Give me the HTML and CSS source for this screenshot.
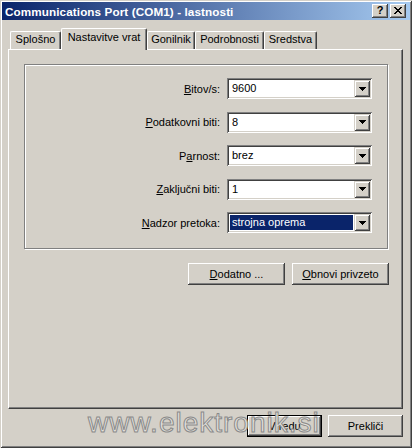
FILE: index.html
```html
<!DOCTYPE html>
<html lang="sl">
<head>
<meta charset="utf-8">
<title>Communications Port (COM1) - lastnosti</title>
<link rel="stylesheet" href="styles.css">
</head>
<body>
<div class="window">
  <div class="titlebar">
    <span class="title">Communications Port (COM1) - lastnosti</span>
    <div class="tbtns">
      <span class="tbtn help">?</span>
      <span class="tbtn close"><svg width="8" height="7" viewBox="0 0 8 7"><path d="M0 0h2v1h1v1h2v-1h1v-1h2v1h-1v1h-1v1h-1v1h1v1h1v1h1v1h-2v-1h-1v-1h-2v1h-1v1h-2v-1h1v-1h1v-1h1v-1h-1v-1h-1v-1h-1z" fill="#000"/></svg></span>
    </div>
  </div>
  <div class="content">
    <div class="tabs">
      <div class="tab w-splosno">Splošno</div>
      <div class="tab active w-nastavitve">Nastavitve vrat</div>
      <div class="tab w-gonilnik">Gonilnik</div>
      <div class="tab w-podrobnosti">Podrobnosti</div>
      <div class="tab w-sredstva">Sredstva</div>
    </div>
    <div class="panel">
      <div class="group">
        <span class="label"><u>B</u>itov/s:</span>
        <div class="combo"><span class="val">9600</span><span class="drop"><svg width="7" height="4" viewBox="0 0 7 4"><path d="M0 0h7v1h-1v1h-1v1h-1v1h-1v-1h-1v-1h-1v-1h-1z" fill="#000"/></svg></span></div>
        <span class="label"><u>P</u>odatkovni biti:</span>
        <div class="combo"><span class="val">8</span><span class="drop"><svg width="7" height="4" viewBox="0 0 7 4"><path d="M0 0h7v1h-1v1h-1v1h-1v1h-1v-1h-1v-1h-1v-1h-1z" fill="#000"/></svg></span></div>
        <span class="label">P<u>a</u>rnost:</span>
        <div class="combo"><span class="val">brez</span><span class="drop"><svg width="7" height="4" viewBox="0 0 7 4"><path d="M0 0h7v1h-1v1h-1v1h-1v1h-1v-1h-1v-1h-1v-1h-1z" fill="#000"/></svg></span></div>
        <span class="label"><u>Z</u>aključni biti:</span>
        <div class="combo"><span class="val">1</span><span class="drop"><svg width="7" height="4" viewBox="0 0 7 4"><path d="M0 0h7v1h-1v1h-1v1h-1v1h-1v-1h-1v-1h-1v-1h-1z" fill="#000"/></svg></span></div>
        <span class="label"><u>N</u>adzor pretoka:</span>
        <div class="combo"><span class="val sel">strojna oprema</span><span class="drop"><svg width="7" height="4" viewBox="0 0 7 4"><path d="M0 0h7v1h-1v1h-1v1h-1v1h-1v-1h-1v-1h-1v-1h-1z" fill="#000"/></svg></span></div>
      </div>
      <div class="actions">
        <button class="btn wide"><u>D</u>odatno ...</button>
        <button class="btn wide"><u>O</u>bnovi privzeto</button>
      </div>
    </div>
    <div class="footer">
      <button class="btn small default">V redu</button>
      <button class="btn small">Prekliči</button>
    </div>
  </div>
  <div class="watermark">www.elektronik.si</div>
</div>
</body>
</html>
```
FILE: styles.css
```css
* { box-sizing: border-box; }
body {
  margin: 0;
  font-family: "Liberation Sans", Arial, sans-serif;
  font-size: 11px;
  color: #000;
  background: #d4d0c8;
}
.window {
  position: relative;
  width: 412px;
  height: 448px;
  background: #d4d0c8;
  padding: 2px;
  box-shadow: inset 1px 1px #d4d0c8, inset -1px -1px #404040, inset 2px 2px #fff, inset -2px -2px #808080;
  overflow: hidden;
}
.titlebar {
  height: 18px;
  background: linear-gradient(to right, #0a246a, #a6caf0);
  display: flex;
  align-items: center;
  padding: 0 4px 0 3px;
}
.title {
  flex: 1;
  color: #fff;
  font-weight: bold;
  font-size: 11.7px;
  letter-spacing: 0.1px;
  white-space: nowrap;
}
.tbtns { display: flex; gap: 2px; }
.tbtn {
  width: 16px;
  height: 14px;
  background: #d4d0c8;
  box-shadow: inset -1px -1px #404040, inset 1px 1px #fff, inset -2px -2px #808080;
  display: flex;
  align-items: center;
  justify-content: center;
}
.help {
  font-weight: bold;
  font-size: 11px;
  line-height: 1;
  padding-bottom: 1px;
}
.close svg { display: block; margin-top: -1px; }
.content { padding: 8px 7px 0 6px; }
.tabs {
  display: flex;
  align-items: flex-end;
  height: 21px;
  padding-left: 2px;
}
.tab {
  height: 18px;
  border-top: 1px solid #fff;
  border-left: 1px solid #fff;
  border-right: 1px solid #404040;
  border-radius: 2px 2px 0 0;
  box-shadow: inset -1px 0 #808080;
  text-align: center;
  line-height: 15px;
  white-space: nowrap;
  background: #d4d0c8;
}
.tab.active {
  height: 22px;
  margin-bottom: -1px;
  padding-top: 1px;
  position: relative;
  z-index: 1;
}
.w-splosno { width: 51px; }
.w-nastavitve { width: 86px; }
.w-gonilnik { width: 48px; }
.w-podrobnosti { width: 69px; }
.w-sredstva { width: 53px; }
.panel {
  height: 360px;
  border: 1px solid;
  border-color: #fff #404040 #404040 #fff;
  box-shadow: inset -1px -1px #808080;
  padding: 14px 14px 0 15px;
}
.group {
  height: 185px;
  border: 1px solid #808080;
  box-shadow: inset 1px 1px #fff, 1px 1px #fff;
  padding: 13px 15px 0 0;
  display: grid;
  grid-template-columns: 1fr 145px;
  column-gap: 7px;
  row-gap: 12.6px;
  align-content: start;
}
.label {
  height: 21px;
  display: flex;
  align-items: center;
  justify-content: flex-end;
  white-space: nowrap;
}
.combo {
  height: 21px;
  background: #fff;
  padding: 2px;
  display: flex;
  box-shadow: inset 1px 1px #808080, inset -1px -1px #fff, inset 2px 2px #404040, inset -2px -2px #d4d0c8;
}
.val {
  flex: 1;
  padding-left: 3px;
  line-height: 17px;
  white-space: nowrap;
}
.val.sel {
  margin: 1px;
  padding-left: 2px;
  line-height: 15px;
  background: #0a246a;
  color: #fff;
}
.drop {
  width: 16px;
  height: 17px;
  background: #d4d0c8;
  box-shadow: inset 1px 1px #d4d0c8, inset -1px -1px #404040, inset 2px 2px #fff, inset -2px -2px #808080;
  display: flex;
  align-items: center;
  justify-content: center;
}
.drop svg { display: block; margin-left: 1px; }
.actions {
  display: flex;
  justify-content: flex-end;
  gap: 7px;
  margin-top: 14px;
  margin-right: -1px;
}
.btn {
  height: 22px;
  border: none;
  padding: 0;
  background: #d4d0c8;
  font-family: inherit;
  font-size: 11px;
  color: #000;
  box-shadow: inset -1px -1px #404040, inset 1px 1px #fff, inset -2px -2px #808080, inset 2px 2px #d4d0c8;
}
.btn.wide { width: 97px; }
.btn.small { width: 75px; }
.btn.default {
  box-shadow: inset 1px 1px #000, inset -1px -1px #000, inset -2px -2px #404040, inset 2px 2px #fff, inset -3px -3px #808080;
}
.footer {
  display: flex;
  justify-content: flex-end;
  gap: 6px;
  margin-top: 6px;
}
.watermark {
  position: absolute;
  left: 88px;
  top: 409px;
  font-size: 28px;
  line-height: 28px;
  letter-spacing: 1px;
  color: #e2e0da;
  -webkit-text-stroke: 1px #8a8a8a;
  white-space: nowrap;
  pointer-events: none;
}
```
